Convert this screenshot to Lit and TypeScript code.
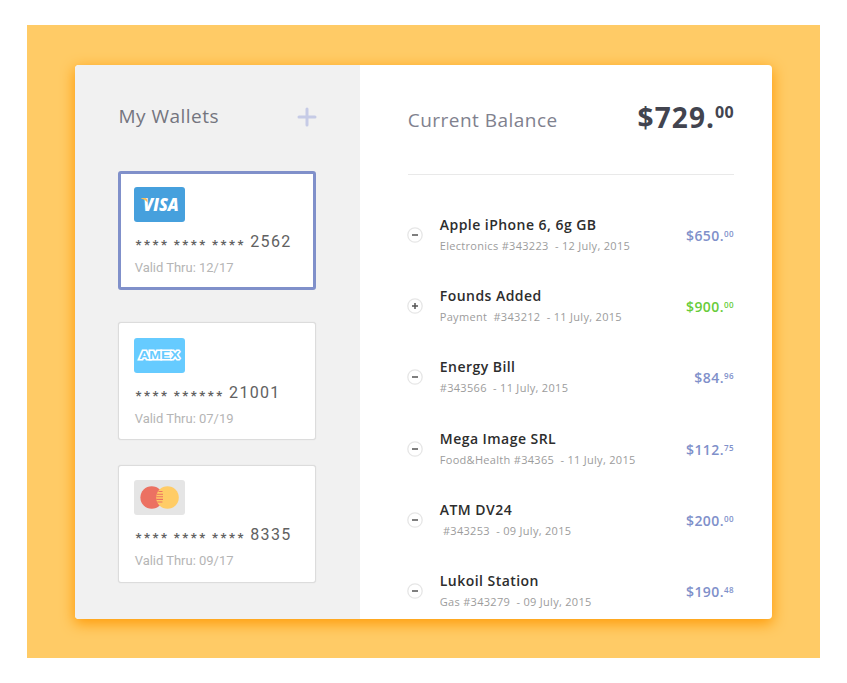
import { LitElement, html, css, svg, nothing } from "lit";
import { customElement, property } from "lit/decorators.js";
import { classMap } from "lit/directives/class-map.js";

type Brand = "visa" | "amex" | "mastercard";

interface Wallet {
  brand: Brand;
  groups: number[];
  tail: string;
  valid: string;
  selected?: boolean;
}

interface Entry {
  title: string;
  detail: string;
  whole: string;
  cents: string;
  income?: boolean;
}

const WALLETS: Wallet[] = [
  { brand: "visa", groups: [4, 4, 4], tail: "2562", valid: "12/17", selected: true },
  { brand: "amex", groups: [4, 6], tail: "21001", valid: "07/19" },
  { brand: "mastercard", groups: [4, 4, 4], tail: "8335", valid: "09/17" },
];

const ENTRIES: Entry[] = [
  { title: "Apple iPhone 6, 6g GB", detail: "Electronics #343223  - 12 July, 2015", whole: "650", cents: "00" },
  { title: "Founds Added", detail: "Payment  #343212  - 11 July, 2015", whole: "900", cents: "00", income: true },
  { title: "Energy Bill", detail: "#343566  - 11 July, 2015", whole: "84", cents: "96" },
  { title: "Mega Image SRL", detail: "Food&Health #34365  - 11 July, 2015", whole: "112", cents: "75" },
  { title: "ATM DV24", detail: " #343253  - 09 July, 2015", whole: "200", cents: "00" },
  { title: "Lukoil Station", detail: "Gas #343279  - 09 July, 2015", whole: "190", cents: "48" },
];

@customElement("brand-logo")
export class BrandLogo extends LitElement {
  @property() brand: Brand = "visa";

  static styles = css`
    :host { display: block; width: 51px; height: 35px; }
    svg { display: block; }
    .visa { font: italic 800 17.8px "Open Sans", sans-serif; fill: #fff; }
    .amex {
      font: 700 11.5px "Liberation Sans", sans-serif;
      fill: #66cbff; stroke: #fff; stroke-width: 3px;
      stroke-linejoin: miter; stroke-miterlimit: 2; paint-order: stroke;
    }
  `;

  private art() {
    if (this.brand === "visa") {
      return svg`<rect width="51" height="35" rx="3" fill="#46a0dd"/>
        <text class="visa" x="9.3" y="23.7" textLength="35.5" lengthAdjust="spacingAndGlyphs">VISA</text>
        <path d="M7.2 11H11.4Q13 11 13.2 12.6L13.6 15.6Q11.4 12.4 7.2 11.5Z" fill="#f5bf5c"/>`;
    }
    if (this.brand === "amex") {
      return svg`<rect width="51" height="35" rx="3" fill="#66cbff"/>
        <text class="amex" x="5.2" y="21.3" textLength="40.5" lengthAdjust="spacingAndGlyphs">AMEX</text>`;
    }
    return svg`<rect width="51" height="35" rx="3" fill="#e5e5e5"/>
      <circle cx="17.7" cy="17.5" r="11.3" fill="#ec7162"/>
      <circle cx="33.5" cy="17.5" r="11.3" fill="#ffcc66"/>
      <path d="M24.5 11.5h4M22.8 14.2h6.2M22.3 16.8h6.7M22.3 19.4h6.7M23.2 22h5.2" stroke="#ec7162" stroke-width="1.1"/>`;
  }

  render() {
    return html`<svg width="51" height="35" viewBox="0 0 51 35">${this.art()}</svg>`;
  }
}

@customElement("wallet-card")
export class WalletCard extends LitElement {
  @property({ attribute: false }) wallet!: Wallet;

  static styles = css`
    :host { display: block; }
    .card {
      box-sizing: border-box; height: 118px; padding: 14.5px 0 0 14.6px;
      border: 1px solid #dcdcdc; border-radius: 3px; background: #fff;
      box-shadow: 0 0 1px #d4d4d4;
    }
    .card.selected { height: 119px; border: 3px solid #8090ca; padding: 13px 0 0 12.6px; box-shadow: none; }
    .number {
      display: flex; align-items: baseline; gap: 7px; height: 19px; margin: 6px 0 0 1.4px;
      font: 16px/28px "Roboto", sans-serif; color: #616161;
    }
    .stars { font-size: 13px; font-weight: 700; letter-spacing: 2.6px; position: relative; top: 2px; margin-right: -2.8px; }
    .tail { letter-spacing: 1.3px; margin-left: .2px; }
    .valid { margin: 11px 0 0 .6px; font: 13px/20px "Roboto", sans-serif; color: #b5b5b5; letter-spacing: -.02px; }
  `;

  render() {
    const w = this.wallet;
    return html`<div class=${classMap({ card: true, selected: !!w.selected })}>
      <brand-logo .brand=${w.brand}></brand-logo>
      <div class="number">
        ${w.groups.map((n) => html`<span class="stars">${"*".repeat(n)}</span>`)}
        <span class="tail">${w.tail}</span>
      </div>
      <div class="valid">Valid Thru: ${w.valid}</div>
    </div>`;
  }
}

@customElement("ledger-row")
export class LedgerRow extends LitElement {
  @property({ attribute: false }) entry!: Entry;

  static styles = css`
    :host { display: flex; height: 71.25px; font-family: "Open Sans", sans-serif; }
    .sign { width: 16px; height: 16px; margin: 12.2px 17px 0 -1px; flex: none; }
    .text { flex: 1; }
    .title { font-size: 14px; line-height: 20px; font-weight: 600; color: #2d2d2d; letter-spacing: .46px; white-space: pre; }
    .detail { margin-top: 2px; font-size: 11px; line-height: 18px; color: #9c9c9c; letter-spacing: .3px; white-space: pre; }
    .amount { display: flex; align-items: flex-start; margin-top: 11px; font-size: 14px; line-height: 20px; font-weight: 600; color: #8090ca; letter-spacing: .45px; }
    .cents { font-size: 8px; line-height: 15px; letter-spacing: .3px; }
    .income { color: #68cc3a; }
  `;

  render() {
    const e = this.entry;
    return html`
      <svg class="sign" viewBox="0 0 16 16">
        <circle cx="8" cy="8" r="7.2" fill="#fff" stroke="#e6e6e6" stroke-width="1.3"/>
        <path d="M5 8h6" stroke="#555" stroke-width="1.5"/>
        ${e.income ? svg`<path d="M8 5v6" stroke="#555" stroke-width="1.5"/>` : nothing}
      </svg>
      <div class="text"><div class="title">${e.title}</div><div class="detail">${e.detail}</div></div>
      <div class=${classMap({ amount: true, income: !!e.income })}><span>$${e.whole}.</span><span class="cents">${e.cents}</span></div>`;
  }
}

@customElement("app-root")
export class AppRoot extends LitElement {
  static styles = css`
    :host { display: block; box-sizing: border-box; width: 847px; height: 683px; padding: 25px 27.3px; background: #fff; font-family: "Open Sans", sans-serif; }
    .stage { box-sizing: border-box; width: 792.4px; height: 633px; padding: 39.5px 47.5px; background: #ffcb66; }
    .panel { display: flex; width: 697.5px; height: 554px; border-radius: 4px; overflow: hidden; background: #fff; }
    .lift { border-radius: 4px; box-shadow: 0 4px 14px 1px #ff9d0b; }
    .side { box-sizing: border-box; width: 285.3px; padding: 0 43.8px 0 43.7px; background: #f1f1f1; }
    .side-head { display: flex; justify-content: space-between; height: 106.5px; }
    h1, h2 { margin: 0; font-weight: 400; color: #74757f; font-size: 19px; line-height: 26px; letter-spacing: .47px; }
    h1 { margin-top: 38px; }
    .add { width: 20px; height: 20px; margin: 42.5px -1px 0 0; }
    .first { margin-bottom: 32px; }
    .second { margin-bottom: 24.5px; }
    .main { flex: 1; padding: 0 38.5px 0 47.7px; }
    .balance { display: flex; justify-content: space-between; height: 109.5px; border-bottom: 1px solid #e9e9e9; }
    h2 { margin-top: 42.5px; color: #7f818e; }
    .total { display: flex; align-items: flex-start; margin-top: 33px; color: #42444f; font-weight: 700; font-size: 28px; line-height: 38px; letter-spacing: 1.1px; }
    .total .cents { font-size: 16px; line-height: 29px; letter-spacing: .2px; }
    .list { padding-top: 39.8px; }
  `;

  render() {
    const spacing = ["first", "second", "third"];
    return html`<div class="stage"><div class="lift"><div class="panel">
      <section class="side">
        <div class="side-head">
          <h1>My Wallets</h1>
          <svg class="add" viewBox="0 0 20 20"><path d="M10 2v16M2 10h16" stroke="#c6cbe6" stroke-width="3" stroke-linecap="round"/></svg>
        </div>
        ${WALLETS.map((w, i) => html`<wallet-card class=${spacing[i]} .wallet=${w}></wallet-card>`)}
      </section>
      <section class="main">
        <div class="balance">
          <h2>Current Balance</h2>
          <div class="total"><span>$729.</span><span class="cents">00</span></div>
        </div>
        <div class="list">${ENTRIES.map((e) => html`<ledger-row .entry=${e}></ledger-row>`)}</div>
      </section>
    </div></div></div>`;
  }
}
